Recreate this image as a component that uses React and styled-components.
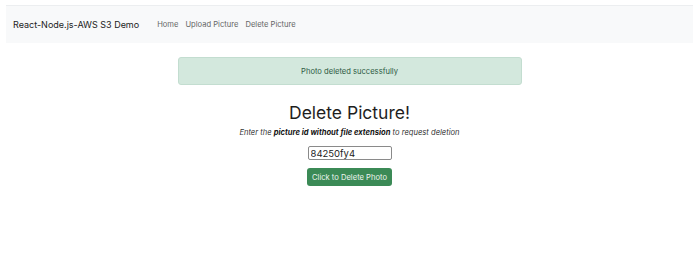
import styled, { createGlobalStyle } from 'styled-components';

const GlobalStyle = createGlobalStyle`
  body {
    margin: 0;
    background: #fff;
    font-family: Inter, "Liberation Sans", sans-serif;
    color: #212529;
  }
`;

const Page = styled.div`
  padding: 5px 7px 0 6px;
  height: 253px;
  box-sizing: border-box;
`;

const Navbar = styled.nav`
  display: flex;
  align-items: center;
  height: 38px;
  background: #f8f9fa;
  border-top: 1px solid #eceef0;
  padding: 0 7px;
  box-sizing: border-box;
`;

const Brand = styled.span`
  font-size: 9px;
  color: #222;
  margin-right: 18px;
`;

const NavLinks = styled.div`
  display: flex;
  gap: 7px;
`;

const NavLink = styled.a`
  font-size: 7.6px;
  color: #666;
  text-decoration: none;
`;

const Main = styled.main`
  display: flex;
  flex-direction: column;
  align-items: center;
  padding-top: 14px;
`;

const Alert = styled.div`
  width: 344px;
  height: 28px;
  display: flex;
  align-items: center;
  justify-content: center;
  background: #d3e8dd;
  border: 1px solid #c3ddd0;
  border-radius: 3px;
  box-sizing: border-box;
  color: #2d5a43;
  font-size: 7.6px;
`;

const Title = styled.h1`
  margin: 17px 0 0;
  font-size: 17.5px;
  font-weight: 400;
  line-height: 22px;
  color: #1e1e1e;
`;

const Hint = styled.p`
  margin: 4px 0 0;
  font-size: 7.6px;
  font-style: italic;
  color: #333;

  b {
    font-weight: 700;
    color: #111;
  }
`;

const IdInput = styled.input`
  margin-top: 9px;
  width: 84px;
  height: 14px;
  box-sizing: border-box;
  border: 1px solid #8a8a8a;
  border-radius: 2px;
  padding: 0 2px;
  font-family: Inter, "Liberation Sans", sans-serif;
  font-size: 9.5px;
  color: #222;
  outline: none;
`;

const DeleteButton = styled.button`
  margin-top: 8px;
  width: 85px;
  height: 18px;
  border: none;
  border-radius: 3px;
  background: #3b8a56;
  color: #eef5f0;
  font-family: Inter, "Liberation Sans", sans-serif;
  font-size: 7.6px;
  padding: 0;
  cursor: pointer;
`;

export default function App() {
  return (
    <>
      <GlobalStyle />
      <Page>
        <Navbar>
          <Brand>React-Node.js-AWS S3 Demo</Brand>
          <NavLinks>
            <NavLink href="#">Home</NavLink>
            <NavLink href="#">Upload Picture</NavLink>
            <NavLink href="#">Delete Picture</NavLink>
          </NavLinks>
        </Navbar>
        <Main>
          <Alert>Photo deleted successfully</Alert>
          <Title>Delete Picture!</Title>
          <Hint>
            Enter the <b>picture id without file extension</b> to request deletion
          </Hint>
          <IdInput defaultValue="84250fy4" />
          <DeleteButton>Click to Delete Photo</DeleteButton>
        </Main>
      </Page>
    </>
  );
}
